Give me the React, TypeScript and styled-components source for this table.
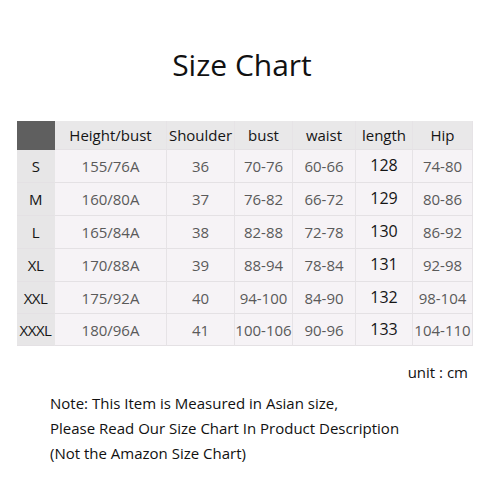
import React from "react";
import styled, { createGlobalStyle } from "styled-components";

const Global = createGlobalStyle`
  html, body { margin: 0; padding: 0; background: #ffffff; }
  body { font-family: "Open Sans", "Noto Sans", sans-serif; }
`;

const Page = styled.div`
  width: 500px;
  height: 500px;
  background: #fff;
  display: flex;
  flex-direction: column;
  box-sizing: border-box;
  padding-top: 46px;
`;

const Title = styled.h1`
  margin: 0;
  font-weight: 400;
  font-size: 30px;
  line-height: 38px;
  color: #111;
  text-align: center;
  padding-right: 16px;
`;

const Table = styled.div`
  margin: 37px 0 0 17px;
  width: 456px;
  display: grid;
  grid-template-columns: 38px 112px 68px 58px 63px 57px 60px;
  grid-template-rows: 29px 33px 33px 33px 33px 32px 32px;
  background: #f6f3f6;
`;

const Cell = styled.div<{ $kind: "corner" | "head" | "size" | "body" | "strong" }>`
  display: flex;
  align-items: center;
  justify-content: center;
  white-space: nowrap;
  box-sizing: border-box;
  font-size: ${(p) => (p.$kind === "strong" ? "16px" : "15px")};
  color: ${(p) => (p.$kind === "body" ? "#5a5a5a" : "#151515")};
  background: ${(p) =>
    p.$kind === "corner"
      ? "#5f5f5f"
      : p.$kind === "head"
      ? "#e9e8e9"
      : p.$kind === "size"
      ? "#e7e6e7"
      : "#f6f3f6"};
  border-right: 1px solid
    ${(p) => (p.$kind === "corner" || p.$kind === "size" ? "transparent" : "#e6e3e6")};
  border-bottom: 1px solid
    ${(p) => (p.$kind === "corner" ? "transparent" : "#e4e1e4")};
  letter-spacing: ${(p) => (p.$kind === "size" ? "-0.5px" : "0")};
  padding-bottom: ${(p) => (p.$kind === "strong" ? "2px" : "0")};
`;

const Unit = styled.div`
  margin: 16px 32px 0 0;
  text-align: right;
  font-size: 15px;
  color: #111;
`;

const Notes = styled.div`
  margin: 9px 0 0 50px;
  font-size: 15px;
  line-height: 25px;
  color: #111;
`;

const headers = ["Height/bust", "Shoulder", "bust", "waist", "length", "Hip"];
const rows: [string, string, string, string, string, string, string][] = [
  ["S", "155/76A", "36", "70-76", "60-66", "128", "74-80"],
  ["M", "160/80A", "37", "76-82", "66-72", "129", "80-86"],
  ["L", "165/84A", "38", "82-88", "72-78", "130", "86-92"],
  ["XL", "170/88A", "39", "88-94", "78-84", "131", "92-98"],
  ["XXL", "175/92A", "40", "94-100", "84-90", "132", "98-104"],
  ["XXXL", "180/96A", "41", "100-106", "90-96", "133", "104-110"],
];

export default function App() {
  return (
    <Page>
      <Global />
      <Title>Size Chart</Title>
      <Table>
        <Cell $kind="corner" />
        {headers.map((h) => (
          <Cell key={h} $kind="head">
            {h}
          </Cell>
        ))}
        {rows.map((r) =>
          r.map((v, i) => (
            <Cell
              key={r[0] + i}
              $kind={i === 0 ? "size" : i === 5 ? "strong" : "body"}
            >
              {v}
            </Cell>
          ))
        )}
      </Table>
      <Unit>unit : cm</Unit>
      <Notes>
        <div>Note: This Item is Measured in Asian size,</div>
        <div>Please Read Our Size Chart In Product Description</div>
        <div>(Not the Amazon Size Chart)</div>
      </Notes>
    </Page>
  );
}
